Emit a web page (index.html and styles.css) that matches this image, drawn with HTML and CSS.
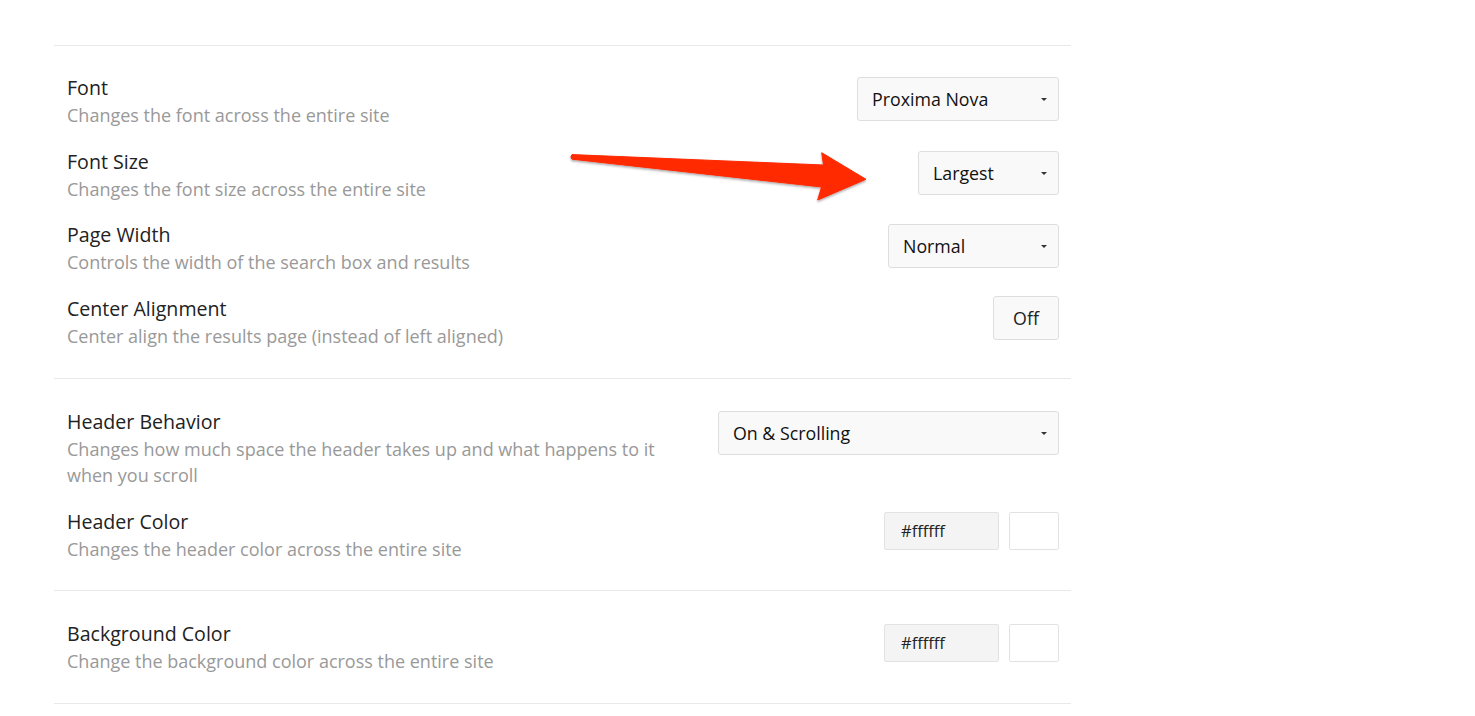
FILE: index.html
```html
<!DOCTYPE html>
<html>
<head>
<meta charset="utf-8">
<title>Settings</title>
<link rel="stylesheet" href="styles.css">
</head>
<body>
<div class="page">
  <section class="group">
    <div class="row">
      <div class="info">
        <div class="title">Font</div>
        <div class="desc">Changes the font across the entire site</div>
      </div>
      <div class="select w-font"><span>Proxima Nova</span><i class="caret"></i></div>
    </div>
    <div class="row">
      <div class="info">
        <div class="title">Font Size</div>
        <div class="desc">Changes the font size across the entire site</div>
      </div>
      <div class="select w-size"><span>Largest</span><i class="caret"></i></div>
    </div>
    <div class="row">
      <div class="info">
        <div class="title">Page Width</div>
        <div class="desc">Controls the width of the search box and results</div>
      </div>
      <div class="select w-width"><span>Normal</span><i class="caret"></i></div>
    </div>
    <div class="row">
      <div class="info">
        <div class="title">Center Alignment</div>
        <div class="desc">Center align the results page (instead of left aligned)</div>
      </div>
      <div class="toggle">Off</div>
    </div>
  </section>
  <section class="group">
    <div class="row">
      <div class="info">
        <div class="title">Header Behavior</div>
        <div class="desc narrow">Changes how much space the header takes up and what happens to it when you scroll</div>
      </div>
      <div class="select w-header"><span>On &amp; Scrolling</span><i class="caret"></i></div>
    </div>
    <div class="row">
      <div class="info">
        <div class="title">Header Color</div>
        <div class="desc">Changes the header color across the entire site</div>
      </div>
      <div class="color"><div class="hex">#ffffff</div><div class="swatch"></div></div>
    </div>
  </section>
  <section class="group">
    <div class="row">
      <div class="info">
        <div class="title">Background Color</div>
        <div class="desc">Change the background color across the entire site</div>
      </div>
      <div class="color"><div class="hex">#ffffff</div><div class="swatch"></div></div>
    </div>
  </section>
</div>
<svg class="annot" width="1475" height="716" viewBox="0 0 1475 716">
  <defs>
    <filter id="sh" x="-10%" y="-50%" width="120%" height="200%">
      <feDropShadow dx="0" dy="1.5" stdDeviation="1.2" flood-color="#000" flood-opacity="0.35"/>
    </filter>
  </defs>
  <path filter="url(#sh)" fill="#ff2a00" stroke="#ff2a00" stroke-width="1" stroke-linejoin="round"
    d="M572 154.6 L823.5 165 L821.7 152.7 L866 179.3 L817.7 200 L821.5 187 L572 159.2 Q569.8 156.9 572 154.6 Z"/>
</svg>
</body>
</html>
```
FILE: styles.css
```css
html, body {
  margin: 0;
  padding: 0;
  background: #ffffff;
}
body {
  font-family: "Open Sans", "Liberation Sans", sans-serif;
  color: #222222;
  position: relative;
  width: 1475px;
  height: 716px;
  overflow: hidden;
}
.page {
  margin-left: 54px;
  margin-top: 45px;
  width: 1017px;
  border-top: 1px solid #e9e9e9;
}
.group {
  border-bottom: 1px solid #e9e9e9;
  padding: 29px 12px 29px 13px;
  display: flex;
  flex-direction: column;
  gap: 19.67px;
}
.group:first-child {
  padding-top: 28px;
}
.group:nth-child(2) {
  padding-bottom: 28px;
}
.row {
  display: flex;
  justify-content: space-between;
  align-items: flex-start;
  gap: 20px;
}
.info {
  flex: 1;
  min-width: 0;
}
.title {
  font-size: 19.6px;
  line-height: 28px;
  color: #222222;
}
.desc {
  font-size: 18px;
  line-height: 26px;
  color: #999999;
}
.narrow {
  max-width: 620px;
}
.select, .toggle {
  margin-top: 3px;
  height: 44px;
  box-sizing: border-box;
  border: 1px solid #dedede;
  border-radius: 3px;
  background: #f9f9f9;
  font-size: 17.8px;
  color: #111111;
  flex-shrink: 0;
}
.select {
  display: flex;
  align-items: center;
  justify-content: space-between;
  padding: 0 11px 0 14px;
}
.caret {
  width: 0;
  height: 0;
  border-left: 3.5px solid transparent;
  border-right: 3.5px solid transparent;
  border-top: 3.5px solid #333333;
  margin-top: 1px;
}
.w-font { width: 202px; }
.w-size { width: 141px; }
.w-width { width: 171px; }
.w-header { width: 341px; }
.toggle {
  width: 66px;
  margin-top: 1px;
  display: flex;
  align-items: center;
  justify-content: center;
  color: #222222;
}
.color {
  margin-top: 4px;
  display: flex;
  gap: 10px;
  flex-shrink: 0;
}
.hex {
  width: 115px;
  height: 38px;
  box-sizing: border-box;
  border: 1px solid #e2e2e2;
  border-radius: 2px;
  background: #f4f4f4;
  font-size: 16.5px;
  line-height: 36px;
  padding-left: 16px;
  color: #222222;
}
.swatch {
  width: 50px;
  height: 38px;
  box-sizing: border-box;
  border: 1px solid #e2e2e2;
  border-radius: 2px;
  background: #ffffff;
}
.annot {
  position: absolute;
  left: 0;
  top: 0;
  pointer-events: none;
}
```
